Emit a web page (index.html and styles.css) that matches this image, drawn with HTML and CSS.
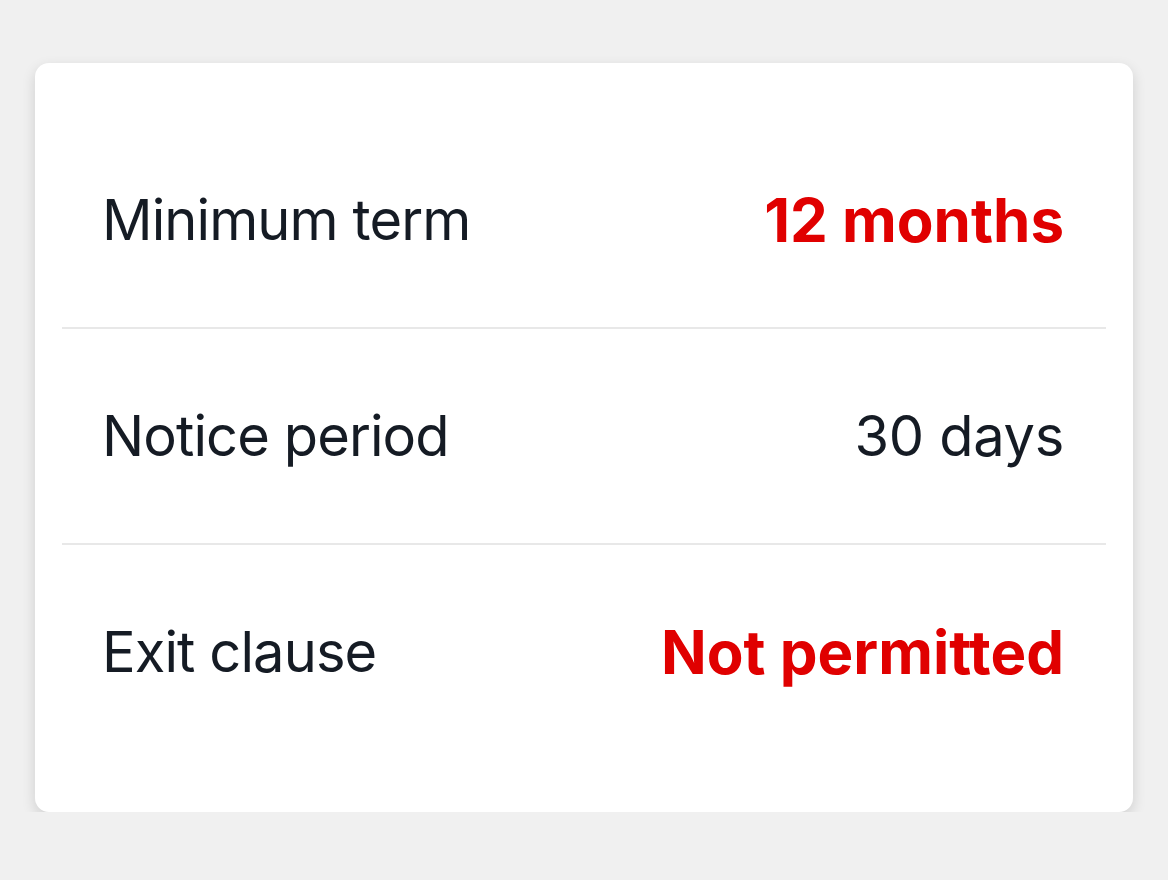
FILE: index.html
```html
<!DOCTYPE html>
<html lang="en">
<head>
  <meta charset="UTF-8" />
  <meta name="viewport" content="width=device-width, initial-scale=1" />
  <title>Contract terms</title>
  <link rel="stylesheet" href="styles.css">
</head>
<body>
  <div class="card">
    <div class="row">
      <span class="label">Minimum term</span>
      <span class="value alert">12 months</span>
    </div>
    <div class="row">
      <span class="label">Notice period</span>
      <span class="value">30 days</span>
    </div>
    <div class="row">
      <span class="label">Exit clause</span>
      <span class="value alert">Not permitted</span>
    </div>
  </div>
</body>
</html>
```

FILE: styles.css
```css
body {
  margin: 0;
  background-color: #f0f0f0;
  font-family: Inter, 'Noto Sans', sans-serif;
  color: #151b24;
  padding: 63px 35px 0 35px;
}

.card {
  background: #ffffff;
  border-radius: 14px;
  box-shadow: 0 5px 14px rgba(0,0,0,0.14);
  padding: 50px 27px 53px;
}

.row {
  display: flex;
  justify-content: space-between;
  align-items: center;
  height: 214px;
  padding: 0 42px 0 40px;
  border-bottom: 2px solid #e8e8e8;
  font-size: 56px;
}

.row:last-child {
  border-bottom: none;
}

.label {
  letter-spacing: -0.9px;
}

.value {
  font-weight: 400;
  letter-spacing: -0.3px;
}

.alert {
  color: #e00000;
  font-weight: 700;
  font-size: 60px;
  letter-spacing: 0;
}
```
